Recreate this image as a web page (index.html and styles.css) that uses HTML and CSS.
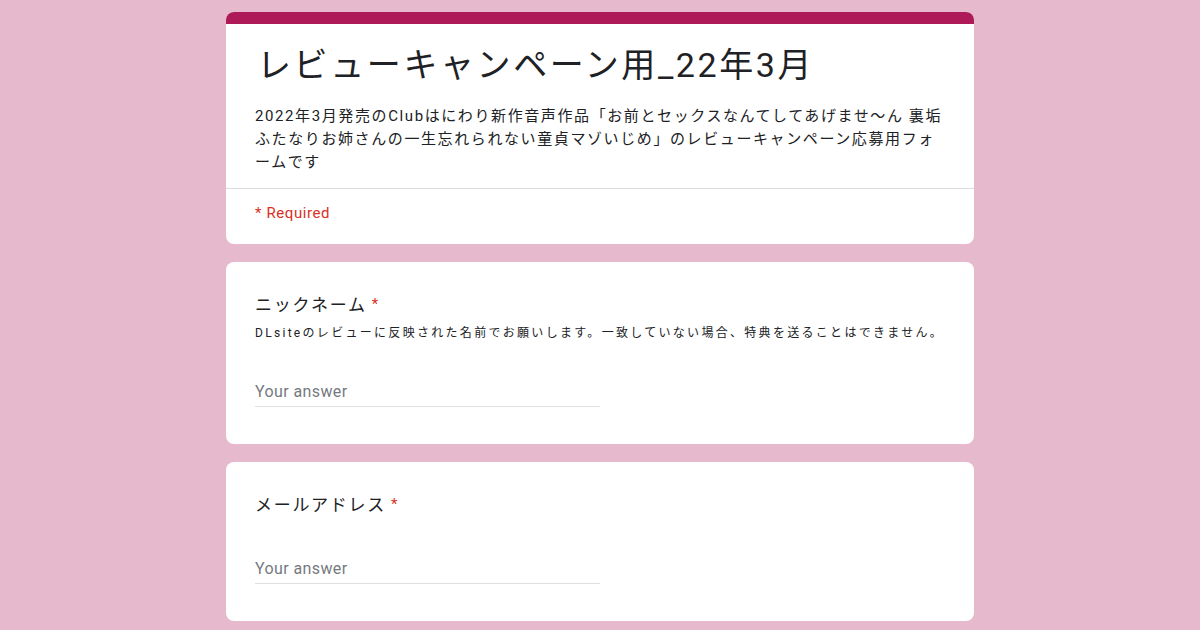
FILE: index.html
```html
<!DOCTYPE html>
<html lang="ja">
<head>
<meta charset="utf-8">
<title>レビューキャンペーン用_22年3月</title>
<link rel="stylesheet" href="styles.css">
</head>
<body>
<main class="form">
  <section class="card header-card">
    <div class="bar"></div>
    <div class="header-main">
      <h1 class="form-title">レビューキャンペーン用_22年3月</h1>
      <p class="form-desc">2022年3月発売のClubはにわり新作音声作品「お前とセックスなんてしてあげませ〜ん 裏垢<br>ふたなりお姉さんの一生忘れられない童貞マゾいじめ」のレビューキャンペーン応募用フォ<br>ームです</p>
    </div>
    <div class="required-note">* Required</div>
  </section>

  <section class="card question">
    <div class="q-title">ニックネーム<span class="star">*</span></div>
    <div class="q-help">DLsiteのレビューに反映された名前でお願いします。一致していない場合、特典を送ることはできません。</div>
    <div class="answer">Your answer</div>
  </section>

  <section class="card question">
    <div class="q-title">メールアドレス<span class="star">*</span></div>
    <div class="answer">Your answer</div>
  </section>
</main>
</body>
</html>
```

FILE: styles.css
```css
html, body {
  margin: 0;
  padding: 0;
}
body {
  background: #e6b9cd;
  font-family: Roboto, "Noto Sans CJK JP", sans-serif;
  color: #202124;
}
.form {
  width: 748px;
  margin: 0 auto;
  padding-top: 12px;
  display: flex;
  flex-direction: column;
  gap: 18px;
}
.card {
  background: #fff;
  border-radius: 8px;
  box-sizing: border-box;
}
.header-card {
  overflow: hidden;
}
.bar {
  height: 12px;
  background: #ad1a57;
}
.header-main {
  padding: 19px 28px 14px 29px;
  border-bottom: 1px solid #dadce0;
}
.form-title {
  margin: 0;
  font-size: 34px;
  line-height: 44px;
  font-weight: 400;
  letter-spacing: 2.6px;
  padding-left: 2px;
}
.form-desc {
  margin: 18px 0 0;
  font-size: 15px;
  line-height: 23px;
  letter-spacing: 1.6px;
}
.required-note {
  padding: 14px 29px 21px;
  font-size: 15px;
  line-height: 20px;
  color: #d93025;
  letter-spacing: 0.6px;
}
.question {
  padding: 30px 28px 37px 29px;
}
.q-title {
  font-size: 17px;
  line-height: 24px;
  letter-spacing: 1.7px;
}
.star {
  color: #d93025;
  font-size: 15px;
  padding-left: 5px;
  vertical-align: 2px;
}
.q-help {
  margin-top: 8px;
  font-size: 12px;
  line-height: 16px;
  letter-spacing: 2.3px;
}
.answer {
  margin-top: 39px;
  width: 345px;
  font-size: 16px;
  line-height: 24px;
  color: #757a7f;
  letter-spacing: 0.4px;
  padding-bottom: 2px;
  border-bottom: 1px solid #e0e0e0;
}
.q-title + .answer {
  margin-top: 40px;
}
```
